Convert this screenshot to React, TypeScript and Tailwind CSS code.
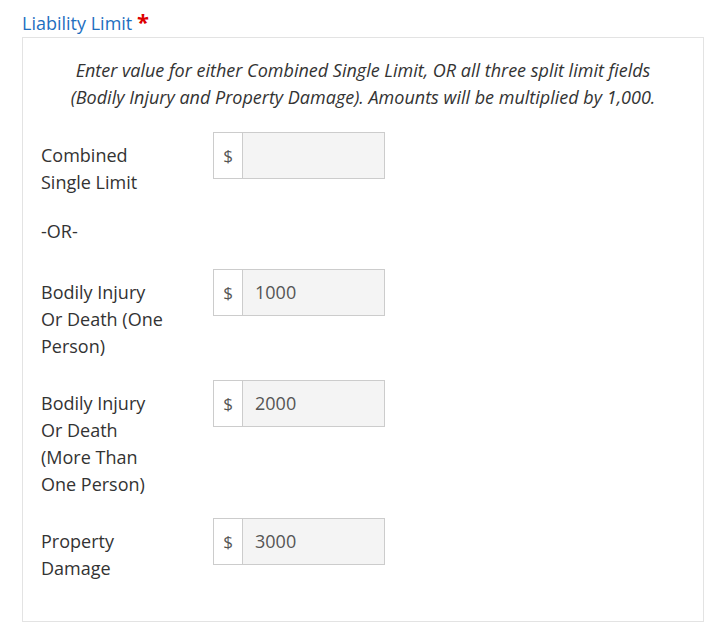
import type { ReactNode } from 'react';

type Row = { label: ReactNode; value: string };

const rows: Row[] = [
  { label: 'Bodily Injury Or Death (One Person)', value: '1000' },
  { label: 'Bodily Injury Or Death (More Than One Person)', value: '2000' },
  { label: 'Property Damage', value: '3000' },
];

function MoneyInput({ value }: { value: string }) {
  return (
    <div className="flex h-[47px] w-[172px] shrink-0">
      <span className="flex w-[30px] items-center justify-center border border-[#cccccc] bg-white text-[17px] text-[#555555]">$</span>
      <input
        readOnly
        value={value}
        className="w-[142px] border border-l-0 border-[#cccccc] bg-[#f4f4f4] px-3 text-[18px] text-[#555555] outline-none"
      />
    </div>
  );
}

function LimitRow({ label, value }: Row) {
  return (
    <div className="flex items-start">
      <div className="w-[126px] shrink-0 pt-[10px]">{label}</div>
      <div className="ml-[46px]">
        <MoneyInput value={value} />
      </div>
    </div>
  );
}

export default function App() {
  return (
    <div className="min-h-screen bg-white px-[22px] pt-[10px] text-[18px] leading-[27px] text-[#333333]" style={{ fontFamily: '"Open Sans", sans-serif' }}>
      <label className="block h-[27px] text-[#1f6fbf]">
        Liability Limit <span className="text-[22px] leading-[20px] font-bold text-[#dd0000]">*</span>
      </label>
      <div className="w-[682px] border border-[#e3e3e3] pt-[19px] pb-[39px]">
        <p className="mx-[30px] text-center italic text-[#333333]">
          Enter value for either Combined Single Limit, OR all three split limit fields (Bodily Injury and Property Damage). Amounts will be multiplied by 1,000.
        </p>
        <div className="mt-[21px] flex flex-col px-[18px]">
          <LimitRow label="Combined Single Limit" value="" />
          <div className="mt-[22px] mb-[24px]">-OR-</div>
          <div className="flex flex-col gap-5">
            {rows.map((r) => (
              <LimitRow key={r.value} label={r.label} value={r.value} />
            ))}
          </div>
        </div>
      </div>
    </div>
  );
}
